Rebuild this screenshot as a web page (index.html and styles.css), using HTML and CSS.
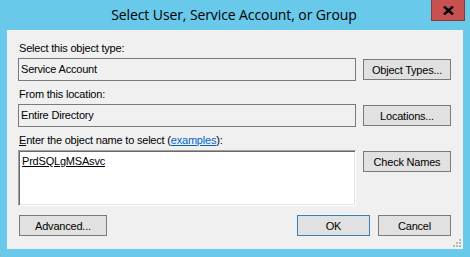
FILE: index.html
```html
<!DOCTYPE html>
<html lang="en">
<head>
    <meta charset="UTF-8">
    <title>Select User, Service Account, or Group</title>
    <link rel="stylesheet" href="styles.css">
</head>
<body>
    <div class="window">
        <!-- Title bar -->
        <div class="titlebar">
            <span class="title">Select User, Service Account, or Group</span>
            <button class="close-btn" title="Close">
                <svg width="11" height="9" viewBox="0 0 11 9"><path d="M1 0.5 L10 8.5 M10 0.5 L1 8.5" stroke="#000" stroke-width="2.4"/></svg>
            </button>
        </div>

        <!-- Client area -->
        <div class="client">
            <div class="section">
                <label class="caption">Select this object type:</label>
                <div class="row">
                    <div class="field">Service Account</div>
                    <button class="btn">Object Types...</button>
                </div>
            </div>

            <div class="section">
                <label class="caption">From this location:</label>
                <div class="row">
                    <div class="field">Entire Directory</div>
                    <button class="btn">Locations...</button>
                </div>
            </div>

            <div class="section">
                <label class="caption"><u>E</u>nter the object name to select (<a href="#" class="link">examples</a>):</label>
                <div class="row">
                    <div class="names"><u>PrdSQLgMSAsvc</u></div>
                    <button class="btn check">Check Names</button>
                </div>
            </div>

            <div class="footer">
                <button class="btn">Advanced...</button>
                <div class="actions">
                    <button class="btn ok">OK</button>
                    <button class="btn cancel">Cancel</button>
                </div>
            </div>

            <svg class="grip" width="10" height="10" viewBox="0 0 10 10">
                <g fill="#b8b8b8">
                    <rect x="7" y="1" width="2" height="2"/>
                    <rect x="4" y="4" width="2" height="2"/>
                    <rect x="7" y="4" width="2" height="2"/>
                    <rect x="1" y="7" width="2" height="2"/>
                    <rect x="4" y="7" width="2" height="2"/>
                    <rect x="7" y="7" width="2" height="2"/>
                </g>
            </svg>
        </div>
    </div>
</body>
</html>
```

FILE: styles.css
```css
* {
    margin: 0;
    padding: 0;
    box-sizing: border-box;
}

body {
    width: 470px;
    height: 257px;
    background-color: #69c9ea;
    font-family: "Liberation Sans", Arial, sans-serif;
    font-size: 11px;
    letter-spacing: -0.2px;
    color: #000;
    overflow: hidden;
}

.window {
    height: 257px;
    display: flex;
    flex-direction: column;
}

.titlebar {
    height: 30px;
    position: relative;
    display: flex;
    justify-content: center;
    align-items: flex-start;
}

.title {
    font-family: "Open Sans", "Noto Sans", sans-serif;
    font-size: 14px;
    letter-spacing: -0.1px;
    line-height: 18px;
    padding-top: 6px;
    padding-right: 2px;
}

.close-btn {
    position: absolute;
    top: 0;
    right: 5px;
    width: 34px;
    height: 21px;
    background-color: #c75050;
    border: 1px solid #8a3a3a;
    border-top: none;
    display: flex;
    justify-content: center;
    align-items: center;
}

.client {
    position: relative;
    margin: 0 7px;
    height: 219px;
    background-color: #f0f0f0;
    padding: 11px 12px 0 11px;
}

.section {
    margin-bottom: 6px;
}

.caption {
    display: block;
    height: 17px;
    line-height: 14px;
    padding-left: 1px;
}

.link {
    color: #0066cc;
}

.row {
    display: flex;
    gap: 7px;
    align-items: flex-start;
}

.field {
    width: 338px;
    height: 23px;
    border: 1px solid #7a7a7a;
    padding-left: 2px;
    line-height: 20px;
}

.btn {
    width: 88px;
    height: 21px;
    margin-top: 1px;
    background-color: #e1e1e1;
    border: 1px solid #7a7a7a;
    font-family: "Liberation Sans", Arial, sans-serif;
    font-size: 11px;
    letter-spacing: -0.2px;
    color: #000;
}

.names {
    width: 338px;
    height: 56px;
    background-color: #fff;
    border-top: 1px solid #a0a0a0;
    border-left: 1px solid #a0a0a0;
    border-right: 1px solid #fff;
    border-bottom: 1px solid #fff;
    box-shadow: inset 1px 1px 0 #696969, inset -1px -1px 0 #e3e3e3;
    padding: 4px 3px;
    line-height: 13px;
}

.footer {
    display: flex;
    justify-content: space-between;
    padding-top: 3px;
    padding-left: 1px;
}

.footer .btn {
    margin-top: 0;
}

.actions {
    display: flex;
    gap: 8px;
}

.ok {
    width: 73px;
    border-color: #3c7fb1;
}

.cancel {
    width: 73px;
}

.grip {
    position: absolute;
    right: 1px;
    bottom: 1px;
}
```
